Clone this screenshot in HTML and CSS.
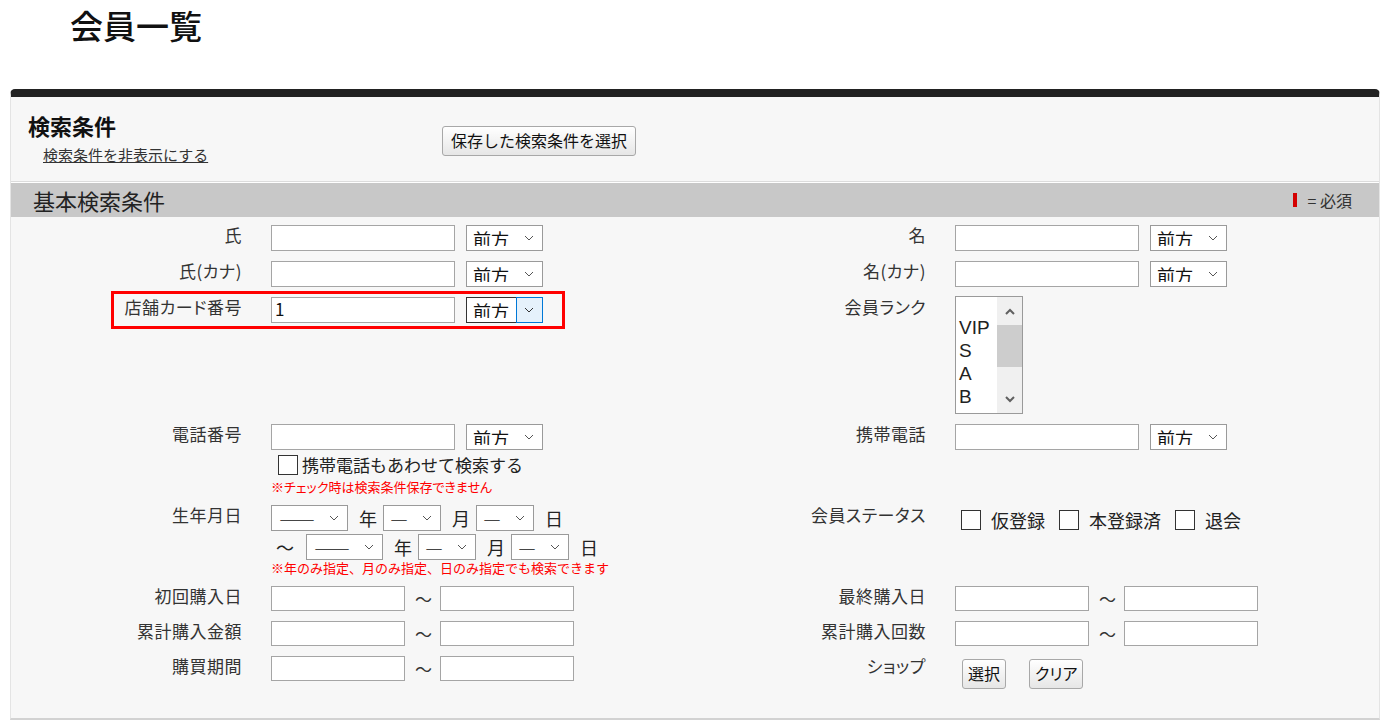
FILE: index.html
```html
<!DOCTYPE html>
<html lang="ja">
<head>
    <meta charset="UTF-8">
    <meta name="viewport" content="width=device-width, initial-scale=1.0">
    <title>会員一覧</title>
    <link rel="stylesheet" href="styles.css">
</head>
<body>
    <h1 class="page-title">会員一覧</h1>

    <div class="panel">
        <div class="panel-head">
            <div class="head-left">
                <h2>検索条件</h2>
                <a href="#" class="toggle-link">検索条件を非表示にする</a>
            </div>
            <button class="btn btn-save">保存した検索条件を選択</button>
        </div>

        <div class="section-bar">
            <span class="section-title">基本検索条件</span>
            <span class="req"><i class="req-mark"></i>= 必須</span>
        </div>

        <div class="form">
            <!-- row 1 -->
            <div class="lbl">氏</div>
            <div class="fld">
                <input class="txt" type="text">
                <span class="sel">
                    <select><option>前方</option></select>
                    <svg class="chev" width="10" height="6" viewBox="0 0 10 6"><polyline points="1,1 5,5 9,1" fill="none" stroke="#555" stroke-width="1"/></svg>
                </span>
            </div>
            <div class="lbl">名</div>
            <div class="fld">
                <input class="txt" type="text">
                <span class="sel">
                    <select><option>前方</option></select>
                    <svg class="chev" width="10" height="6" viewBox="0 0 10 6"><polyline points="1,1 5,5 9,1" fill="none" stroke="#555" stroke-width="1"/></svg>
                </span>
            </div>

            <!-- row 2 -->
            <div class="lbl">氏(カナ)</div>
            <div class="fld">
                <input class="txt" type="text">
                <span class="sel">
                    <select><option>前方</option></select>
                    <svg class="chev" width="10" height="6" viewBox="0 0 10 6"><polyline points="1,1 5,5 9,1" fill="none" stroke="#555" stroke-width="1"/></svg>
                </span>
            </div>
            <div class="lbl">名(カナ)</div>
            <div class="fld">
                <input class="txt" type="text">
                <span class="sel">
                    <select><option>前方</option></select>
                    <svg class="chev" width="10" height="6" viewBox="0 0 10 6"><polyline points="1,1 5,5 9,1" fill="none" stroke="#555" stroke-width="1"/></svg>
                </span>
            </div>

            <!-- row 3 -->
            <div class="lbl">店舗カード番号</div>
            <div class="fld">
                <input class="txt" type="text" value="1">
                <span class="sel is-focus">
                    <select><option>前方</option></select>
                    <span class="arrow-box"></span>
                    <svg class="chev" width="10" height="6" viewBox="0 0 10 6"><polyline points="1,1 5,5 9,1" fill="none" stroke="#333" stroke-width="1"/></svg>
                </span>
            </div>
            <div class="lbl">会員ランク</div>
            <div class="fld">
                <div class="listbox">
                    <div class="opts">
                        <div class="opt">&nbsp;</div>
                        <div class="opt">VIP</div>
                        <div class="opt">S</div>
                        <div class="opt">A</div>
                        <div class="opt">B</div>
                        <div class="opt">C</div>
                    </div>
                    <div class="scroll">
                        <div class="sb-btn sb-up">
                            <svg width="10" height="7" viewBox="0 0 10 7"><polyline points="1,6 5,2 9,6" fill="none" stroke="#606060" stroke-width="2"/></svg>
                        </div>
                        <div class="sb-thumb"></div>
                        <div class="sb-space"></div>
                        <div class="sb-btn sb-down">
                            <svg width="10" height="7" viewBox="0 0 10 7"><polyline points="1,1 5,5 9,1" fill="none" stroke="#606060" stroke-width="2"/></svg>
                        </div>
                    </div>
                </div>
            </div>

            <!-- row 4 -->
            <div class="lbl">電話番号</div>
            <div class="fld stack">
                <div class="line">
                    <input class="txt" type="text">
                    <span class="sel">
                        <select><option>前方</option></select>
                        <svg class="chev" width="10" height="6" viewBox="0 0 10 6"><polyline points="1,1 5,5 9,1" fill="none" stroke="#555" stroke-width="1"/></svg>
                    </span>
                </div>
                <label class="check-line"><input type="checkbox" class="cb">携帯電話もあわせて検索する</label>
                <div class="note note-palt">※チェック時は検索条件保存できません</div>
            </div>
            <div class="lbl">携帯電話</div>
            <div class="fld">
                <input class="txt" type="text">
                <span class="sel">
                    <select><option>前方</option></select>
                    <svg class="chev" width="10" height="6" viewBox="0 0 10 6"><polyline points="1,1 5,5 9,1" fill="none" stroke="#555" stroke-width="1"/></svg>
                </span>
            </div>

            <!-- row 5 -->
            <div class="lbl">生年月日</div>
            <div class="fld stack">
                <div class="line">
                    <span class="sel sel-y"><select><option>――</option></select><svg class="chev" width="10" height="6" viewBox="0 0 10 6"><polyline points="1,1 5,5 9,1" fill="none" stroke="#555" stroke-width="1"/></svg></span>
                    <span class="unit">年</span>
                    <span class="sel sel-md"><select><option>―</option></select><svg class="chev" width="10" height="6" viewBox="0 0 10 6"><polyline points="1,1 5,5 9,1" fill="none" stroke="#555" stroke-width="1"/></svg></span>
                    <span class="unit">月</span>
                    <span class="sel sel-md"><select><option>―</option></select><svg class="chev" width="10" height="6" viewBox="0 0 10 6"><polyline points="1,1 5,5 9,1" fill="none" stroke="#555" stroke-width="1"/></svg></span>
                    <span class="unit">日</span>
                </div>
                <div class="line line-2">
                    <span class="wave">〜</span>
                    <span class="sel sel-y"><select><option>――</option></select><svg class="chev" width="10" height="6" viewBox="0 0 10 6"><polyline points="1,1 5,5 9,1" fill="none" stroke="#555" stroke-width="1"/></svg></span>
                    <span class="unit">年</span>
                    <span class="sel sel-md"><select><option>―</option></select><svg class="chev" width="10" height="6" viewBox="0 0 10 6"><polyline points="1,1 5,5 9,1" fill="none" stroke="#555" stroke-width="1"/></svg></span>
                    <span class="unit">月</span>
                    <span class="sel sel-md"><select><option>―</option></select><svg class="chev" width="10" height="6" viewBox="0 0 10 6"><polyline points="1,1 5,5 9,1" fill="none" stroke="#555" stroke-width="1"/></svg></span>
                    <span class="unit">日</span>
                </div>
                <div class="note">※年のみ指定、月のみ指定、日のみ指定でも検索できます</div>
            </div>
            <div class="lbl">会員ステータス</div>
            <div class="fld">
                <div class="checks">
                    <label><input type="checkbox" class="cb">仮登録</label>
                    <label><input type="checkbox" class="cb">本登録済</label>
                    <label><input type="checkbox" class="cb">退会</label>
                </div>
            </div>

            <!-- row 6 -->
            <div class="lbl">初回購入日</div>
            <div class="fld">
                <input class="txt short" type="text"><span class="tilde">〜</span><input class="txt short" type="text">
            </div>
            <div class="lbl">最終購入日</div>
            <div class="fld">
                <input class="txt short" type="text"><span class="tilde">〜</span><input class="txt short" type="text">
            </div>

            <!-- row 7 -->
            <div class="lbl">累計購入金額</div>
            <div class="fld">
                <input class="txt short" type="text"><span class="tilde">〜</span><input class="txt short" type="text">
            </div>
            <div class="lbl">累計購入回数</div>
            <div class="fld">
                <input class="txt short" type="text"><span class="tilde">〜</span><input class="txt short" type="text">
            </div>

            <!-- row 8 -->
            <div class="lbl">購買期間</div>
            <div class="fld">
                <input class="txt short" type="text"><span class="tilde">〜</span><input class="txt short" type="text">
            </div>
            <div class="lbl">ショップ</div>
            <div class="fld">
                <div class="shop-btns">
                    <button class="btn btn-sm">選択</button>
                    <button class="btn btn-sm">クリア</button>
                </div>
            </div>

            <div class="highlight"></div>
        </div>
    </div>
</body>
</html>
```

FILE: styles.css
```css
body {
    margin: 0;
    font-family: "Noto Sans CJK JP", "Noto Sans", sans-serif;
    color: #333;
    background: #fff;
}
.page-title {
    margin: 5px 0 0 70px;
    font-size: 33px;
    line-height: 40px;
    font-weight: 500;
    color: #111;
}

.panel {
    margin: 44px 0 0 10px;
    width: 1370px;
    box-sizing: border-box;
    background: #f7f7f7;
    border-top: 8px solid #222;
    border-left: 1px solid #e4e4e4;
    border-right: 1px solid #e4e4e4;
    border-bottom: 2px solid #d2d2d2;
    border-radius: 5px 5px 0 0;
}
.panel-head {
    display: flex;
    align-items: center;
    padding-left: 17px;
    border-bottom: 1px solid #dcdcdc;
}
.head-left {
    width: 414px;
    flex: none;
    padding: 15px 0 15px;
}
.head-left h2 {
    margin: 0;
    font-size: 22px;
    line-height: 26px;
    font-weight: bold;
    color: #111;
}
.toggle-link {
    display: inline-block;
    margin: 7px 0 0 15px;
    font-size: 15px;
    line-height: 20px;
    color: #333;
    text-decoration: underline;
}

.btn {
    font-family: inherit;
    color: #111;
    background: linear-gradient(#ffffff, #e6e6e6);
    border: 1px solid #a8a8a8;
    border-radius: 3px;
    cursor: pointer;
}
.btn-save {
    height: 30px;
    padding: 0 8px 2px;
    font-size: 16px;
    margin-top: 3px;
}

.section-bar {
    display: flex;
    justify-content: space-between;
    align-items: center;
    height: 34px;
    padding: 0 27px 0 22px;
    background: #c8c8c8;
    border-top: 1px solid #fff;
}
.section-title {
    font-size: 22px;
    color: #222;
}
.req {
    display: flex;
    align-items: center;
    font-size: 16px;
    color: #333;
}
.req-mark {
    display: inline-block;
    width: 4px;
    height: 14px;
    background: #d40000;
    margin-right: 11px;
}

.form {
    position: relative;
    display: grid;
    grid-template-columns: 245px 440px 244px 1fr;
    row-gap: 10px;
    padding: 8px 0 29px;
}
.lbl {
    text-align: right;
    padding-right: 14px;
    font-size: 17px;
    line-height: 14px;
    padding-top: 3px;
    letter-spacing: 0.5px;
    font-feature-settings: "palt";
    color: #333;
}
.fld {
    padding-left: 15px;
    display: flex;
    align-items: flex-start;
}
.fld.stack {
    flex-direction: column;
}
.line {
    display: flex;
    align-items: center;
}
.line-2 {
    margin-top: 3px;
    padding-left: 5px;
}

.txt {
    width: 184px;
    height: 26px;
    box-sizing: border-box;
    margin: 0;
    padding: 0 3px 3px;
    border: 1px solid #a5a5a5;
    background: #fff;
    font-family: inherit;
    font-size: 17px;
    color: #111;
}
.txt.short {
    width: 134px;
    height: 25px;
}
.tilde {
    margin: 0 8px 0 10px;
    font-size: 17px;
    line-height: 25px;
    color: #333;
}

.sel {
    position: relative;
    display: inline-block;
    margin-left: 11px;
    height: 26px;
}
.sel select {
    appearance: none;
    -webkit-appearance: none;
    width: 77px;
    height: 26px;
    box-sizing: border-box;
    margin: 0;
    padding: 0 0 4px 6px;
    border: 1px solid #9a9a9a;
    border-radius: 0;
    background: #fff;
    font-family: inherit;
    font-size: 18px;
    color: #111;
}
.sel .chev {
    position: absolute;
    right: 9px;
    top: 10px;
    pointer-events: none;
}
.sel.is-focus select {
    border-color: #333;
}
.sel.is-focus .arrow-box {
    position: absolute;
    right: 0;
    top: 0;
    width: 27px;
    height: 26px;
    box-sizing: border-box;
    background: #e5f1fb;
    border: 1px solid #0078d7;
    pointer-events: none;
}
.sel-y,
.sel-md {
    margin-left: 0;
}
.sel-md select {
    width: 58px;
}
.sel-y select {
    padding-left: 7px;
}
.unit {
    padding: 0 6px 0 11px;
    font-size: 18px;
    color: #222;
}
.wave {
    font-size: 18px;
    color: #222;
    margin-right: 12px;
}

.listbox {
    display: flex;
    width: 68px;
    height: 118px;
    box-sizing: border-box;
    margin-top: -1px;
    border: 1px solid #9a9a9a;
    background: #fff;
    overflow: hidden;
}
.opts {
    flex: 1;
    margin-top: -4px;
    padding-left: 3px;
    font-family: "Liberation Sans", Arial, sans-serif;
    font-size: 19px;
    line-height: 23px;
    color: #222;
}
.scroll {
    width: 25px;
    flex: none;
    display: flex;
    flex-direction: column;
    background: #f0f0f0;
}
.sb-btn {
    height: 28px;
    display: flex;
    align-items: center;
    justify-content: center;
}
.sb-down {
    height: 27px;
}
.sb-thumb {
    height: 42px;
    background: #cdcdcd;
}
.sb-space {
    flex: 1;
}

.cb {
    appearance: none;
    -webkit-appearance: none;
    width: 20px;
    height: 20px;
    margin: 0;
    box-sizing: border-box;
    border: 1px solid #333;
    background: #fff;
    flex: none;
}
.check-line {
    display: flex;
    align-items: center;
    gap: 4px;
    margin-top: 3px;
    padding-left: 7px;
    font-size: 17px;
    line-height: 24px;
    color: #222;
}
.note {
    margin-top: 0;
    font-size: 13px;
    line-height: 16px;
    color: #f00;
}
.note-palt {
    font-feature-settings: "palt";
    margin-top: 2px;
}

.checks {
    display: flex;
    align-items: center;
    gap: 14px;
    margin-top: 2px;
    padding-left: 6px;
}
.checks label {
    display: flex;
    align-items: center;
    gap: 10px;
    font-size: 18px;
    color: #222;
}

.shop-btns {
    display: flex;
    gap: 23px;
    margin: 3px 0 0 7px;
}
.btn-sm {
    height: 30px;
    padding: 0 5px 2px;
    font-size: 16px;
    font-feature-settings: "palt";
}

.highlight {
    position: absolute;
    left: 100px;
    top: 74px;
    width: 454px;
    height: 38px;
    box-sizing: border-box;
    border: 3px solid #f00;
    pointer-events: none;
}
```
